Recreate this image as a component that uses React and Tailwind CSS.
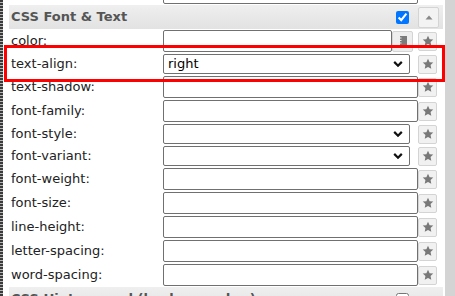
import React from 'react';

const rows = [
  { label: 'color:', kind: 'color' },
  { label: 'text-align:', kind: 'select', value: 'right' },
  { label: 'text-shadow:', kind: 'text' },
  { label: 'font-family:', kind: 'text' },
  { label: 'font-style:', kind: 'select' },
  { label: 'font-variant:', kind: 'select' },
  { label: 'font-weight:', kind: 'text' },
  { label: 'font-size:', kind: 'text' },
  { label: 'line-height:', kind: 'text' },
  { label: 'letter-spacing:', kind: 'text' },
  { label: 'word-spacing:', kind: 'text' },
];

function StarButton() {
  return (
    <button className="flex h-[19px] w-[19px] shrink-0 items-center justify-center rounded-[2px] border border-[#d4d4d4] bg-[#f1f1f1]">
      <svg width="12" height="12" viewBox="0 0 24 24">
        <path
          d="M12 1.5l3.2 6.9 7.3.8-5.4 5 1.5 7.3L12 17.8l-6.6 3.7 1.5-7.3-5.4-5 7.3-.8z"
          fill="#787878"
        />
      </svg>
    </button>
  );
}

function Chevron() {
  return (
    <svg width="10" height="7" viewBox="0 0 10 7" className="absolute right-[6px] top-1/2 -translate-y-1/2">
      <path d="M1.2 1.4L5 5.2l3.8-3.8" fill="none" stroke="#111" strokeWidth="2.2" />
    </svg>
  );
}

function Control({ kind, value }) {
  if (kind === 'color') {
    return (
      <div className="flex items-center">
        <input className="h-[22px] w-[229px] rounded-[2px] border border-[#707070] bg-white" />
        <button className="flex h-[21px] w-[21px] items-center justify-center rounded-[2px] border border-[#d4d4d4] bg-[#eeeeee]">
          <svg width="8" height="10" viewBox="0 0 8 10">
            <rect x="1" y="0" width="7" height="10" fill="#7b7b7b" />
            <rect x="0" y="1.5" width="2.5" height="1" fill="#eee" />
            <rect x="0" y="4" width="2.5" height="1" fill="#eee" />
            <rect x="0" y="6.5" width="2.5" height="1" fill="#eee" />
          </svg>
        </button>
        <div className="ml-[5px]">
          <StarButton />
        </div>
      </div>
    );
  }
  if (kind === 'select') {
    return (
      <div className="flex items-center">
        <div className="relative flex h-[20px] w-[247px] items-center rounded-[2px] border border-[#707070] bg-white pl-[4px] text-[13px] text-black">
          {value}
          <Chevron />
        </div>
        <div className="ml-[8px]">
          <StarButton />
        </div>
      </div>
    );
  }
  return (
    <div className="flex items-center">
      <input className="h-[22px] w-[255px] rounded-[2px] border border-[#707070] bg-white" />
      <StarButton />
    </div>
  );
}

function Header({ title, checked, arrow }) {
  return (
    <div className="flex h-[24px] shrink-0 items-center bg-[linear-gradient(#efefef,#e2e2e2)] pl-[2px] pr-[4px]">
      <span className="flex-1 text-[13px] font-bold text-[#555]">{title}</span>
      <input type="checkbox" defaultChecked={checked} className="m-0 h-[13px] w-[13px]" />
      <div className="ml-[9px] w-[21px]">
        {arrow && (
          <button className="flex h-[21px] w-[21px] items-center justify-center rounded-[2px] border border-[#d4d4d4] bg-[#f3f3f3]">
            <svg width="8" height="5" viewBox="0 0 8 5">
              <path d="M4 0.5L7.5 4.5H0.5z" fill="#888" />
            </svg>
          </button>
        )}
      </div>
    </div>
  );
}

export default function App() {
  return (
    <div className="relative flex h-[296px] w-[455px] overflow-hidden bg-white font-['DejaVu_Sans',Verdana,sans-serif]">
      <div className="w-[3px] shrink-0 bg-[repeating-linear-gradient(to_bottom,#3a3a3a_0,#3a3a3a_2px,#b5b5b5_2px,#b5b5b5_3px)]" />
      <div className="ml-[6px] flex w-[434px] flex-col">
        <div className="-mt-[19px] flex h-[24px] shrink-0 items-center">
          <div className="w-[154px]" />
          <input className="h-[22px] w-[255px] rounded-[2px] border border-[#707070] bg-white" />
        </div>
        <Header title="CSS Font & Text" checked arrow />
        {rows.map((r) => (
          <div
            key={r.label}
            className={`flex shrink-0 items-center ${r.kind === 'select' ? 'h-[22px]' : 'h-[24px]'}`}
          >
            <div className="w-[154px] pl-[2px] text-[13px] text-[#222]">{r.label}</div>
            <Control kind={r.kind} value={r.value} />
          </div>
        ))}
        <Header title="CSS Hintergrund (background ...)" checked={false} />
      </div>
      <div className="ml-[2px] w-[10px] bg-[#d4d4d4]" />
      <div className="absolute left-[4px] top-[45px] h-[37px] w-[441px] border-[3px] border-[#ff0000]" />
    </div>
  );
}
